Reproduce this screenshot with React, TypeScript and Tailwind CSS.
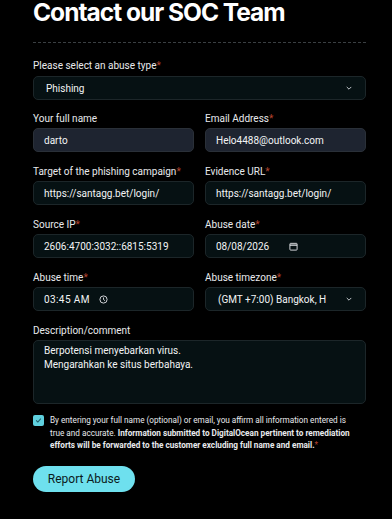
import React from "react";

const Req = () => <span className="text-[#b4432e]">*</span>;

function Label({ children, req }: { children: React.ReactNode; req?: boolean }) {
  return (
    <div className="text-[10px] leading-[13px] text-[#e8eaed] mb-[3px] whitespace-nowrap">
      {children}
      {req && <Req />}
    </div>
  );
}

const inputBase =
  "h-[24px] rounded-[5px] border border-[#1c2629] bg-[#061113] text-[10px] text-[#f2f4f5] flex items-center px-[10px] whitespace-nowrap overflow-hidden";

function Chevron() {
  return (
    <svg width="8" height="8" viewBox="0 0 10 10" fill="none" className="text-[#c9cfd2] shrink-0">
      <path d="M2.5 4l2.5 2.5L7.5 4" stroke="currentColor" strokeWidth="1.2" strokeLinecap="round" strokeLinejoin="round" />
    </svg>
  );
}

export default function App() {
  return (
    <div
      className="w-[392px] h-[519px] bg-black overflow-hidden"
      style={{ fontFamily: "Roboto, 'Noto Sans', sans-serif" }}
    >
      <div className="pl-[33px] pr-[26px] w-[392px]">
        <h1
          className="text-[24.5px] font-bold leading-[26px] text-white tracking-[-1px] mt-[-1px]"
          style={{ fontFamily: "Inter, sans-serif" }}
        >
          Contact our SOC Team
        </h1>
        <div className="mt-[17px] border-t border-dashed border-[#3a3f42]" />
        <div className="mt-[16px]">
          <div className="text-[10px] leading-[13px] text-[#e8eaed] mb-[4px] whitespace-nowrap">
            Please select an abuse type
            <Req />
          </div>
          <div className={inputBase + " justify-between !px-[12px]"}>
            <span>Phishing</span>
            <Chevron />
          </div>
        </div>

        <div className="grid grid-cols-2 gap-x-[11px] mt-[12px]">
          <div>
            <Label>Your full name</Label>
            <div className={inputBase + " !bg-[#1e2430] !border-[#2a3038]"}>darto</div>
          </div>
          <div>
            <Label req>Email Address</Label>
            <div className={inputBase + " !bg-[#1e2430] !border-[#2a3038]"}>Helo4488@outlook.com</div>
          </div>
        </div>

        <div className="grid grid-cols-2 gap-x-[11px] mt-[13px]">
          <div>
            <Label req>Target of the phishing campaign</Label>
            <div className={inputBase}>https://santagg.bet/login/</div>
          </div>
          <div>
            <Label req>Evidence URL</Label>
            <div className={inputBase}>https://santagg.bet/login/</div>
          </div>
        </div>

        <div className="grid grid-cols-2 gap-x-[11px] mt-[13px]">
          <div>
            <Label req>Source IP</Label>
            <div className={inputBase}>2606:4700:3032::6815:5319</div>
          </div>
          <div>
            <Label req>Abuse date</Label>
            <div className={inputBase + " gap-[20px]"}>
              <span>08/08/2026</span>
              <svg width="9" height="9" viewBox="0 0 10 10" fill="none">
                <rect x="1" y="1.5" width="8" height="7.5" rx="0.8" stroke="#e5e7eb" strokeWidth="1" />
                <path d="M1 3.5h8" stroke="#e5e7eb" strokeWidth="1.2" />
              </svg>
            </div>
          </div>
        </div>

        <div className="grid grid-cols-2 gap-x-[11px] mt-[13px]">
          <div>
            <Label req>Abuse time</Label>
            <div className={inputBase + " gap-[9px]"}>
              <span className="tracking-[0.4px]">03:45 AM</span>
              <svg width="9" height="9" viewBox="0 0 10 10" fill="none">
                <circle cx="5" cy="5" r="4" stroke="#e5e7eb" strokeWidth="1" />
                <path d="M5 2.8V5l1.6 1.3" stroke="#e5e7eb" strokeWidth="1" />
              </svg>
            </div>
          </div>
          <div>
            <Label req>Abuse timezone</Label>
            <div className={inputBase + " justify-between !px-[12px]"}>
              <span>(GMT +7:00) Bangkok, H</span>
              <Chevron />
            </div>
          </div>
        </div>

        <div className="mt-[13px]">
          <Label>Description/comment</Label>
          <div className="h-[64px] rounded-[5px] border border-[#1c2629] bg-[#061113] text-[10px] leading-[14px] text-[#f2f4f5] px-[10px] pt-[3px]">
            <div>Berpotensi menyebarkan virus.</div>
            <div>Mengarahkan ke situs berbahaya.</div>
          </div>
        </div>

        <div className="mt-[10px] flex gap-[6px]">
          <div className="mt-[1px] w-[11px] h-[11px] shrink-0 rounded-[2px] bg-[#5fd0de] flex items-center justify-center">
            <svg width="7" height="7" viewBox="0 0 10 10" fill="none">
              <path d="M2 5.2l2 2 4-4.4" stroke="#1f5f6a" strokeWidth="1.5" strokeLinecap="round" strokeLinejoin="round" />
            </svg>
          </div>
          <p className="text-[8.2px] leading-[12.5px] text-[#e8eaed] whitespace-nowrap">
            By entering your full name (optional) or email, you affirm all information entered is
            <br />
            true and accurate.{" "}
            <span className="font-bold">
              Information submitted to DigitalOcean pertinent to remediation
              <br />
              efforts will be forwarded to the customer excluding full name and email.
            </span>
            <Req />
          </p>
        </div>

        <button className="mt-[14px] h-[26px] w-[102px] rounded-full bg-[#6ee0ee] text-[12px] text-[#0b1a1c] flex items-center justify-center">
          Report Abuse
        </button>
      </div>
    </div>
  );
}
